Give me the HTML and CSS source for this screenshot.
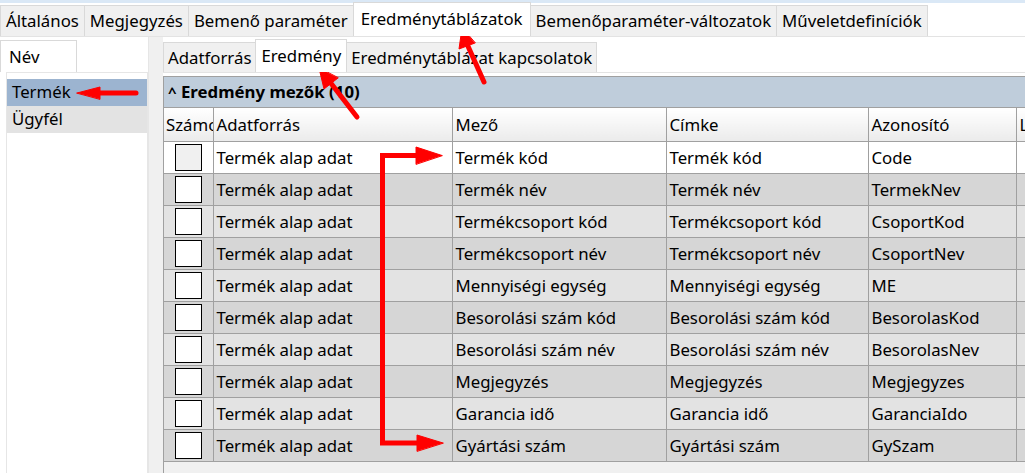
FILE: index.html
```html
<!DOCTYPE html>
<html lang="hu">
<head>
    <meta charset="UTF-8">
    <title>Eredménytáblázatok</title>
    <link rel="stylesheet" href="styles.css">
</head>
<body>

<div class="title-strip"></div>

<!-- Outer tabs -->
<nav class="tabs outer-tabs">
    <span class="tab">Általános</span>
    <span class="tab">Megjegyzés</span>
    <span class="tab">Bemenő paraméter</span>
    <span class="tab active">Eredménytáblázatok</span>
    <span class="tab">Bemenőparaméter-változatok</span>
    <span class="tab">Műveletdefiníciók</span>
</nav>

<div class="workspace">
    <!-- Left list -->
    <aside class="left-pane">
        <div class="tabs pane-tabs">
            <span class="tab active">Név</span>
        </div>
        <ul class="name-list">
            <li class="selected">Termék</li>
            <li class="alt">Ügyfél</li>
        </ul>
    </aside>

    <div class="splitter"></div>

    <!-- Right side -->
    <main class="right-pane">
        <div class="tabs inner-tabs">
            <span class="tab">Adatforrás</span>
            <span class="tab active">Eredmény</span>
            <span class="tab">Eredménytáblázat kapcsolatok</span>
        </div>

        <section class="grid-box">
            <div class="group-header"><span class="caret">^</span> Eredmény mezők (10)</div>
            <table class="grid">
                <colgroup>
                    <col class="c-num">
                    <col class="c-source">
                    <col class="c-field">
                    <col class="c-label">
                    <col class="c-id">
                    <col class="c-rest">
                </colgroup>
                <thead>
                    <tr>
                        <th><span class="clip">Számo</span></th>
                        <th>Adatforrás</th>
                        <th>Mező</th>
                        <th>Címke</th>
                        <th>Azonosító</th>
                        <th><span class="clip">Leírás</span></th>
                    </tr>
                </thead>
                <tbody>
                    <tr class="current">
                        <td><span class="check"></span></td>
                        <td>Termék alap adat</td><td>Termék kód</td><td>Termék kód</td><td>Code</td><td></td>
                    </tr>
                    <tr class="dark">
                        <td><span class="check"></span></td>
                        <td>Termék alap adat</td><td>Termék név</td><td>Termék név</td><td>TermekNev</td><td></td>
                    </tr>
                    <tr class="light">
                        <td><span class="check"></span></td>
                        <td>Termék alap adat</td><td>Termékcsoport kód</td><td>Termékcsoport kód</td><td>CsoportKod</td><td></td>
                    </tr>
                    <tr class="dark">
                        <td><span class="check"></span></td>
                        <td>Termék alap adat</td><td>Termékcsoport név</td><td>Termékcsoport név</td><td>CsoportNev</td><td></td>
                    </tr>
                    <tr class="light">
                        <td><span class="check"></span></td>
                        <td>Termék alap adat</td><td>Mennyiségi egység</td><td>Mennyiségi egység</td><td>ME</td><td></td>
                    </tr>
                    <tr class="dark">
                        <td><span class="check"></span></td>
                        <td>Termék alap adat</td><td>Besorolási szám kód</td><td>Besorolási szám kód</td><td>BesorolasKod</td><td></td>
                    </tr>
                    <tr class="light">
                        <td><span class="check"></span></td>
                        <td>Termék alap adat</td><td>Besorolási szám név</td><td>Besorolási szám név</td><td>BesorolasNev</td><td></td>
                    </tr>
                    <tr class="dark">
                        <td><span class="check"></span></td>
                        <td>Termék alap adat</td><td>Megjegyzés</td><td>Megjegyzés</td><td>Megjegyzes</td><td></td>
                    </tr>
                    <tr class="light">
                        <td><span class="check"></span></td>
                        <td>Termék alap adat</td><td>Garancia idő</td><td>Garancia idő</td><td>GaranciaIdo</td><td></td>
                    </tr>
                    <tr class="dark">
                        <td><span class="check"></span></td>
                        <td>Termék alap adat</td><td>Gyártási szám</td><td>Gyártási szám</td><td>GySzam</td><td></td>
                    </tr>
                </tbody>
            </table>
        </section>
    </main>
</div>

<!-- Red annotation arrows drawn over the screenshot -->
<svg class="annotations" width="1025" height="473" viewBox="0 0 1025 473">
    <g fill="#ff0000" stroke="#ff0000" stroke-linecap="round" stroke-linejoin="round">
        <!-- Termék -->
        <line x1="136" y1="93" x2="98" y2="93" stroke-width="5"/>
        <polygon points="77,93 100,87 100,99" stroke-width="1"/>
        <!-- Eredmény tab -->
        <line x1="357" y1="117" x2="330" y2="82" stroke-width="5"/>
        <polygon points="319,68 324,89 338,78" stroke-width="1"/>
        <!-- Eredménytáblázatok tab -->
        <line x1="484" y1="82" x2="467" y2="44" stroke-width="5"/>
        <polygon points="462,28 459,49 475,43" stroke-width="1"/>
        <!-- bracket -->
        <polyline points="420,155.5 382.5,155.5 382.5,443 420,443" fill="none" stroke-width="5" stroke-linecap="butt" stroke-linejoin="miter"/>
        <polygon points="442,155.5 416,147 416,164" stroke-width="1"/>
        <polygon points="443,443 417,435 417,451" stroke-width="1"/>
    </g>
</svg>

</body>
</html>
```

FILE: styles.css
```css
/* General */
* {
    box-sizing: border-box;
}

body {
    margin: 0;
    width: 1025px;
    height: 473px;
    overflow: hidden;
    position: relative;
    background: #fff;
    color: #000;
    font-family: 'Noto Sans', 'Open Sans', sans-serif;
    font-size: 16.8px;
}

.title-strip {
    height: 3px;
    background: #dae8f6;
}

/* Tabs */
.tabs {
    display: flex;
    align-items: flex-end;
}

.tab {
    background: #f0f0f0;
    border: 1px solid #d9d9d9;
    border-bottom: none;
    margin-right: -1px;
    padding: 0 5px;
    height: 31px;
    line-height: 29px;
    white-space: nowrap;
}

.tab.active {
    background: #fff;
    height: 34px;
    line-height: 31px;
    position: relative;
    z-index: 1;
    padding: 0 7px;
}

.outer-tabs {
    height: 34px;
    border-bottom: 1px solid #e3e3e3;
}

/* Workspace */
.workspace {
    display: flex;
    height: 436px;
}

.left-pane {
    width: 148px;
    display: flex;
    flex-direction: column;
    padding-top: 3px;
}

.pane-tabs .tab.active {
    width: 77px;
    height: 32px;
    padding: 0 8px;
}

.name-list {
    list-style: none;
    margin: 0 0 0 6px;
    padding: 6px 0 0 0;
    flex: 1;
    border-left: 1px solid #e6e6e6;
    border-right: 1px solid #e6e6e6;
    border-top: 1px solid #e6e6e6;
}

.name-list li {
    height: 27px;
    line-height: 26px;
    padding-left: 5px;
}

.name-list li.selected {
    background: #9cb4d0;
}

.name-list li.alt {
    background: #e3e3e3;
}

.splitter {
    width: 15px;
    background: #f0f0f0;
    border-left: 1px solid #e6e6e6;
}

/* Right pane */
.right-pane {
    flex: 1;
    display: flex;
    flex-direction: column;
    padding-top: 3px;
    min-width: 0;
}

.inner-tabs {
    border-bottom: 1px solid #e3e3e3;
    height: 33px;
}

.inner-tabs .tab {
    height: 30px;
    padding: 0 4px;
}

.inner-tabs .tab.active {
    height: 33px;
    padding: 0 5px;
}

.grid-box {
    margin-top: 3px;
    flex: 1;
    background: #f0f0f0;
    border-left: 1px solid #a0a0a0;
    border-top: 1px solid #a0a0a0;
    overflow: hidden;
}

.group-header {
    height: 31px;
    line-height: 30px;
    background: #bfcddb;
    font-weight: bold;
    padding-left: 4px;
    border-bottom: 1px solid #a0a0a0;
}

.caret {
    font-size: 15px;
}

/* Grid */
.grid {
    border-collapse: collapse;
    table-layout: fixed;
    width: 1000px;
}

.c-num { width: 49px; }
.c-source { width: 239px; }
.c-field { width: 214px; }
.c-label { width: 202px; }
.c-id { width: 148px; }
.c-rest { width: 148px; }

.grid th,
.grid td {
    height: 32px;
    padding: 0 3px;
    text-align: left;
    font-weight: normal;
    white-space: nowrap;
    overflow: hidden;
    border: 1px solid #a0a0a0;
    border-top: none;
}

.grid th:first-child,
.grid td:first-child {
    border-left: none;
    padding: 0 0 0 2px;
}

.grid th {
    height: 33px;
    background: linear-gradient(#ffffff, #ebebeb);
}

.clip {
    display: block;
    overflow: hidden;
}

.grid td:first-child {
    text-align: center;
    padding: 0;
}

.grid tr.current td {
    background: #fff;
}

.grid tr.dark td {
    background: #d6d6d6;
}

.grid tr.light td {
    background: #e3e3e3;
}

.check {
    display: inline-block;
    width: 27px;
    height: 27px;
    border: 1px solid #000;
    background: #fff;
    vertical-align: middle;
}

.grid tr.current .check {
    background: #f0f0f0;
}

/* Annotations */
.annotations {
    position: absolute;
    left: 0;
    top: 0;
    pointer-events: none;
}
```
